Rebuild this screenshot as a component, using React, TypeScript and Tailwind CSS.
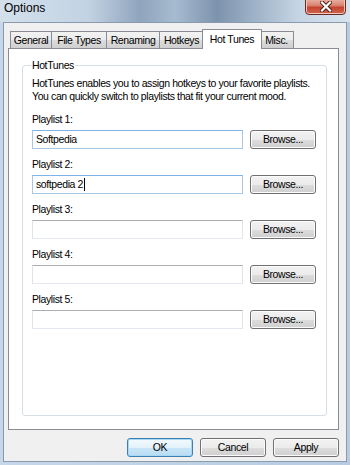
import { useState } from 'react';

const tabs = ['General', 'File Types', 'Renaming', 'Hotkeys', 'HotTunes', 'Misc.'];

const TabLabels: Record<string, string> = {
  HotTunes: 'Hot Tunes'
};

const tabWidths: Record<string, string> = {
  General: 'w-[42px]',
  'File Types': 'w-[56px]',
  Renaming: 'w-[54px]',
  Hotkeys: 'w-[45px]',
  HotTunes: 'w-[60px]',
  'Misc.': 'w-[35px]'
};

const txt = 'text-[10.5px] tracking-[-0.4px]';

const WinButton = ({ label, primary, className }: { label: string; primary?: boolean; className?: string }) => (
  <button
    type="button"
    className={`flex h-[19px] items-center justify-center rounded-[3px] border leading-none text-black ${txt} ${
      primary
        ? 'border-[#3c7fb1] bg-[linear-gradient(180deg,#f4fafe_0%,#e3f2fb_50%,#c9e6f7_51%,#b9dcf2_100%)] shadow-[inset_0_0_0_1px_#a7d8f4]'
        : 'border-[#707070] bg-[linear-gradient(180deg,#f2f2f2_0%,#ebebeb_50%,#dddddd_51%,#cfcfcf_100%)] shadow-[inset_0_0_0_1px_#fcfcfc]'
    } ${className ?? ''}`}
  >
    {label}
  </button>
);

const PlaylistRow = ({
  index,
  value,
  active
}: {
  index: number;
  value: string;
  active?: boolean;
}) => (
  <div className="flex flex-col">
    <span className={`h-[13px] leading-[13px] ${txt}`}>Playlist {index}:</span>
    <div className="mt-[4px] flex items-center gap-[7px]">
      <div
        className={`flex h-[19px] w-[211px] items-center border px-[3px] ${txt} ${
          active
            ? 'border-[#a9c8e6] border-t-[#7eb4ea] bg-white'
            : 'border-[#e2e3ea] border-t-[#abadb3] border-b-[#e3e9ef] bg-white'
        }`}
      >
        {value}
        {index === 2 && <span className="ml-[1px] inline-block h-[13px] w-px bg-black" />}
      </div>
      <WinButton label="Browse..." className="w-[66px]" />
    </div>
  </div>
);

export default function App() {
  const [active] = useState('HotTunes');
  const values = ['Softpedia', 'softpedia 2', '', '', ''];

  return (
    <div
      className="flex h-[465px] w-[350px] flex-col overflow-hidden bg-[linear-gradient(90deg,#c6d7e9_0%,#b8cbe0_100%)] text-black"
      style={{ fontFamily: '"Liberation Sans", Arial, sans-serif' }}
    >
      {/* title bar */}
      <div className="relative h-[22px] shrink-0 bg-[linear-gradient(90deg,#d3e0ec_0%,#c3d3e3_25%,#8fa5bd_40%,#a7bbd0_50%,#7d93ad_62%,#9cb0c6_72%,#c5d4e3_85%,#d8e3ee_100%)]">
        <span className="absolute left-[4px] top-[0px] text-[12px] leading-[16px]">Options</span>
        <div className="absolute right-[4px] top-[-2px] flex h-[17px] w-[41px] items-center justify-center rounded-b-[4px] border border-[#6b2a22] bg-[linear-gradient(180deg,#eab3a5_0%,#d8806d_45%,#c4432f_55%,#d0664c_100%)] shadow-[inset_0_0_0_1px_#f2c8bd]">
          <svg width="12" height="11" viewBox="0 0 12 11">
            <path d="M2 1.5 L10 9.5 M10 1.5 L2 9.5" stroke="#4a1a14" strokeWidth="4" strokeLinecap="square" />
            <path d="M2 1.5 L10 9.5 M10 1.5 L2 9.5" stroke="#ffffff" strokeWidth="2.2" strokeLinecap="square" />
          </svg>
        </div>
      </div>

      {/* body */}
      <div className="mx-[3px] mb-[3px] flex flex-1 flex-col border border-[#8a9bb0] bg-[#f0f0f0] pl-[4px] pr-[7px]">
        {/* tab strip */}
        <div className="mt-[5px] flex h-[20px] items-end pl-[2px]">
          {tabs.map((t) =>
            t === active ? (
              <div
                key={t}
                className={`relative z-10 -mx-[2px] mb-[-1px] flex h-[20px] items-start justify-center border border-b-0 border-[#898c95] bg-white pt-[3px] leading-[13px] ${txt} ${tabWidths[t]}`}
              >
                {TabLabels[t] ?? t}
              </div>
            ) : (
              <div
                key={t}
                className={`-ml-px flex h-[17px] items-start justify-center border border-b-0 border-[#898c95] bg-[linear-gradient(180deg,#f2f2f2_0%,#ebebeb_50%,#dddddd_51%,#cfcfcf_100%)] pt-[2px] leading-[13px] first:ml-0 ${txt} ${tabWidths[t]}`}
              >
                {t}
              </div>
            )
          )}
        </div>

        {/* tab panel */}
        <div className="flex h-[382px] flex-col border border-[#898c95] bg-white pb-[13px] pl-[13px] pr-[11px] pt-[10px]">
          <fieldset className="flex-1 rounded-[3px] border border-[#d5dfe5] pb-0 pl-[9px] pr-[10px]">
            <legend className={`ml-[-1px] px-[1px] leading-[13px] ${txt}`}>HotTunes</legend>
            <div className={`mt-[5px] whitespace-nowrap leading-[13px] ${txt}`}>
              <div>HotTunes enables you to assign hotkeys to your favorite playlists.</div>
              <div>You can quickly switch to playlists that fit your current mood.</div>
            </div>
            <div className="mt-[10px] flex flex-col gap-[9px]">
              {values.map((v, i) => (
                <PlaylistRow key={i} index={i + 1} value={v} active={i < 2} />
              ))}
            </div>
          </fieldset>
        </div>

        {/* buttons */}
        <div className="mt-[8px] flex justify-end gap-[7px]">
          <WinButton label="OK" primary className="w-[66px]" />
          <WinButton label="Cancel" className="w-[66px]" />
          <WinButton label="Apply" className="w-[66px]" />
        </div>
      </div>
    </div>
  );
}
